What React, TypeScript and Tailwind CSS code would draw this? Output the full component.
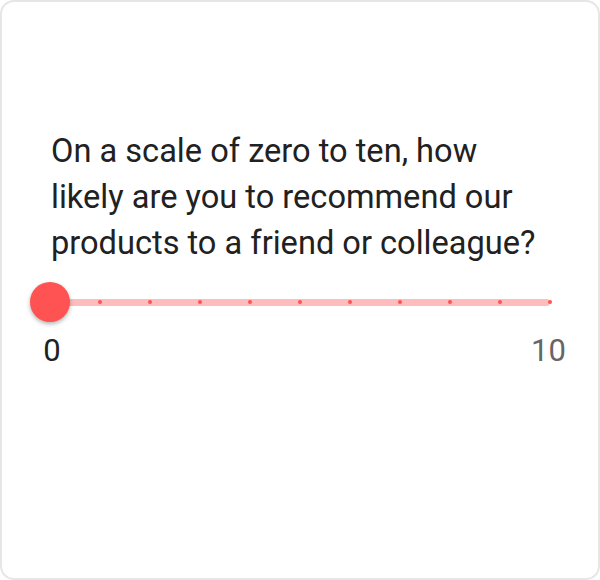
import React from "react";

export default function App() {
  const ticks = Array.from({ length: 11 }, (_, i) => i);
  return (
    <div className="w-[600px] h-[580px] bg-white" style={{ fontFamily: "Roboto, 'Noto Sans', sans-serif" }}>
      <div className="w-full h-full border-2 border-[#e6e6e6] rounded-[14px] flex flex-col pt-[126px]">
        <div className="pl-[49px] w-[537px] text-[length:32.6px] leading-[46px] text-[#212121]">
          On a scale of zero to ten, how likely are you to recommend our products to a friend or colleague?
        </div>
        <div className="relative mx-[48px] mt-[16px] h-[40px] flex items-center">
          <div className="relative w-full h-[7px] rounded-full bg-[#ffbcbc]">
            {ticks.map((i) => (
              <span
                key={i}
                className="absolute top-1/2 w-[4px] h-[4px] -ml-[2px] -mt-[2px] rounded-full bg-[#ff5252]"
                style={{ left: `${i * 10}%` }}
              />
            ))}
          </div>
          <div className="absolute left-[-20px] top-0 w-[40px] h-[40px] rounded-full bg-[#ff5252] shadow-[0_2px_4px_rgba(0,0,0,0.3)]" />
        </div>
        <div className="flex justify-between mx-[33px] mt-[12px] text-[31px] leading-[34px]">
          <span className="w-[34px] text-center text-[#212121]">0</span>
          <span className="w-[34px] text-right text-[#666666]">10</span>
        </div>
      </div>
    </div>
  );
}
